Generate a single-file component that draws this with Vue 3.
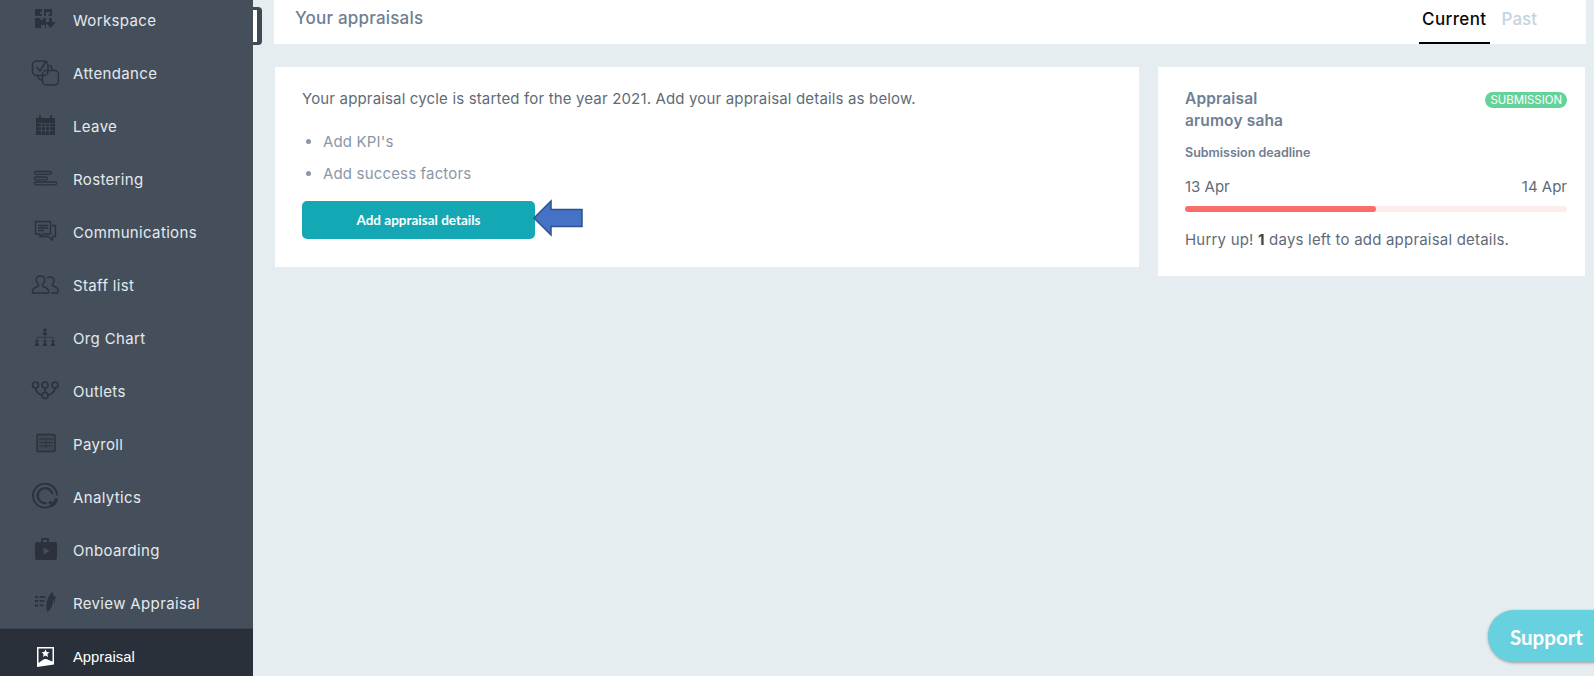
<template>
  <div class="page">
    <aside class="sidebar">
      <nav class="nav">
        <a
          v-for="item in menu"
          :key="item.label"
          class="nav-item"
          :class="{ active: item.active }"
        >
          <svg class="nav-icon" viewBox="0 0 28 28" v-html="item.icon"></svg>
          <span>{{ item.label }}</span>
        </a>
      </nav>
    </aside>
    <div class="scroll-handle"></div>

    <main class="main">
      <header class="topbar">
        <h1>Your appraisals</h1>
        <div class="tabs">
          <span class="tab current">Current</span>
          <span class="tab">Past</span>
        </div>
      </header>

      <div class="cards">
        <section class="card intro">
          <p class="lead">Your appraisal cycle is started for the year 2021. Add your appraisal details as below.</p>
          <ul>
            <li>Add KPI's</li>
            <li>Add success factors</li>
          </ul>
          <div class="action">
            <button class="add-btn">Add appraisal details</button>
            <svg class="arrow" width="52" height="38" viewBox="0 0 52 38">
              <path d="M2 19 19 2v8.500h31v17H19V36z" fill="#4472c4" stroke="#2f528f" stroke-width="1.500" />
            </svg>
          </div>
        </section>

        <section class="card deadline">
          <div class="deadline-head">
            <h2>Appraisal<br />arumoy saha</h2>
            <span class="badge">SUBMISSION</span>
          </div>
          <div class="deadline-label">Submission deadline</div>
          <div class="dates">
            <span>13 Apr</span>
            <span>14 Apr</span>
          </div>
          <div class="bar">
            <div class="bar-fill" :style="{ width: progress + '%' }"></div>
          </div>
          <p class="hurry">Hurry up! <b>1</b> days left to add appraisal details.</p>
        </section>
      </div>
    </main>

    <div class="support">Support</div>
  </div>
</template>

<script setup>
const progress = 50;

const menu = [
  {
    label: "Workspace",
    icon: '<path fill="currentColor" d="M4 3h7v3h-2v2h2v2H4zM13 3h8v7h-3l-1-2h2V6h-4v4h-2zM4 12h5l1 2h2v-2h3v10h-1v-3h-4v3H4z"/><path fill="currentColor" d="M18 12h3v4h4l-5.500 6-5.500-6h4z"/>',
  },
  {
    label: "Attendance",
    icon: '<g fill="none" stroke="currentColor" stroke-width="1.500" stroke-linecap="round" stroke-linejoin="round"><rect x="1.500" y="2" width="15.500" height="14.500" rx="4"/><path d="M6 8.500 9 12l6-9.500"/><path d="M19 6.500c1.500.8 2.300 2.300 2.300 4.500M6.500 17c.5 2 1.500 3.500 4 4"/><rect x="11.500" y="11.500" width="16" height="14.500" rx="4"/></g>',
  },
  {
    label: "Leave",
    icon: '<path fill="currentColor" d="M5 6h3V3h2v3h9V3h2v3h3v17H5z"/><g fill="#444f5b"><path d="M6.500 11h16v.8h-16zM6.500 14.500h16v.8h-16zM6.500 18h16v.8h-16zM10 11h.8v11H10zM14 11h.8v11H14zM18 11h.8v11H18z"/></g>',
  },
  {
    label: "Rostering",
    icon: '<g fill="none" stroke="currentColor" stroke-width="1.300"><rect x="3.500" y="6.500" width="17" height="2.800" rx="1.400"/><rect x="3.500" y="12" width="13" height="2.800" rx="1.400"/><rect x="3.500" y="17" width="22" height="2.800" rx="1.400"/></g>',
  },
  {
    label: "Communications",
    icon: '<g fill="none" stroke="currentColor" stroke-width="1.400" stroke-linejoin="round"><path d="M4.500 3.500h15v12.500H12l-3 3v-3H4.500z"/><path d="M21 7.500h3.500v11h-3v4l-4-4h-7"/><path d="M7 7.500h10M7 10h10M7 12.500h6"/></g>',
  },
  {
    label: "Staff list",
    icon: '<g fill="none" stroke="currentColor" stroke-width="1.400" stroke-linejoin="round"><path d="M1.500 22v-2.500c0-1.500 1-2 3-3l3-1.500v-2C6 12 5.200 10.500 5.200 9c0-2.500 2-4 4.300-4s4.300 1.500 4.300 4c0 1.500-.8 3-2.300 4v2l3 1.500c2 1 3 1.500 3 3V22z"/><path d="M16 7c1-.8 2-1 3-1 2.200 0 4 1.500 4 3.500 0 1.200-.5 2.500-1.500 3.500v1.500l3 1.500c1.500.7 2.500 1.500 2.500 2.500V22h-7"/></g>',
  },
  {
    label: "Org Chart",
    icon: '<g fill="currentColor"><circle cx="14" cy="6" r="1.800"/><path d="M11.800 11c0-2 1-3 2.200-3s2.200 1 2.200 3z"/><circle cx="6" cy="17" r="1.500"/><path d="M4 22c0-2 .8-3.500 2-3.500S8 20 8 22z"/><circle cx="14" cy="17" r="1.500"/><path d="M12 22c0-2 .8-3.500 2-3.500s2 1.500 2 3.500z"/><circle cx="22" cy="17" r="1.500"/><path d="M20 22c0-2 .8-3.500 2-3.500s2 1.500 2 3.500z"/></g><path fill="none" stroke="currentColor" stroke-width=".8" d="M14 11v4M6 15v-1.700h16V15"/>',
  },
  {
    label: "Outlets",
    icon: '<g fill="none" stroke="currentColor" stroke-width="1.600"><circle cx="4.500" cy="8" r="3"/><circle cx="14" cy="8" r="3"/><circle cx="24" cy="8" r="3"/><circle cx="14" cy="18.500" r="3"/><path d="M4.500 11c0 4 4 6.500 6.500 7M14 11v4.500M24 11c0 4-4 6.500-7 7"/></g>',
  },
  {
    label: "Payroll",
    icon: '<rect x="6" y="4.500" width="18" height="17" rx="1.500" fill="currentColor" fill-opacity=".25" stroke="currentColor" stroke-width="1.600"/><path stroke="currentColor" d="M8 9h14M8 12.500h14M8 16h14M15 9v9"/>',
  },
  {
    label: "Analytics",
    icon: '<g fill="none" stroke="currentColor"><path stroke-width="1.800" d="M21.500 22A12 12 0 1 1 26 12.500"/><path stroke-width="2.200" d="M15.500 20a7.500 7.500 0 1 1 6-9"/><path stroke-width="3.400" d="M25.500 15.500a10.500 10.500 0 0 1-4 6.500l-3-3.500"/></g>',
  },
  {
    label: "Onboarding",
    icon: '<path fill="currentColor" d="M10 6V3.500A1.500 1.500 0 0 1 11.500 2h5A1.500 1.500 0 0 1 18 3.500V6h6a2 2 0 0 1 2 2v14a2 2 0 0 1-2 2H6a2 2 0 0 1-2-2V8a2 2 0 0 1 2-2zm2 0h4V4h-4z"/><path fill="#444f5b" d="m12.500 11.500 6 3.500-6 3.500z"/>',
  },
  {
    label: "Review Appraisal",
    icon: '<g fill="currentColor"><rect x="4" y="7" width="3" height="2.200"/><rect x="4" y="11" width="3" height="2.200"/><rect x="4" y="15.500" width="3" height="2.200"/><rect x="8.500" y="7" width="6" height="1.800"/><rect x="8.500" y="11" width="5" height="1.800"/><rect x="8.500" y="15.500" width="4" height="1.800"/><path d="M16 23c-1-5-.5-12 2-16l3-4 1 1 .5 3 2 .5-1 8-1-6c-.5 6-2 11-6.500 13.500z"/></g>',
  },
  {
    label: "Appraisal",
    active: true,
    icon: '<path fill="#fff" fill-rule="evenodd" d="M6 4h17v17.500L6 24zM7.500 5.500V20c3-2 5-4 7-4s4 1.500 7 2.500V5.500z"/><path fill="#fff" d="m14.500 6.500 1.200 2.500 2.800.3-2.100 1.800.6 2.800-2.500-1.400-2.500 1.400.6-2.800-2.100-1.800 2.800-.3z"/>',
  },
];
</script>

<style scoped>
.page {
  position: relative;
  display: flex;
  width: 1594px;
  height: 676px;
  overflow: hidden;
  background: #e6edf1;
  font-family: "Inter", "Open Sans", sans-serif;
}

/* SIDEBAR */
.sidebar {
  width: 253px;
  flex-shrink: 0;
  background: #444f5b;
  overflow: hidden;
}
.nav {
  margin-top: -6.500px;
}
.nav-item {
  display: flex;
  align-items: center;
  gap: 14px;
  height: 53px;
  padding-left: 31px;
  color: #e4e9ed;
  font-size: 15px;
  letter-spacing: 0.35px;
}
.nav-icon {
  width: 28px;
  height: 28px;
  flex-shrink: 0;
  color: #2b323d;
}
.nav-item.active {
  margin-top: -2px;
  padding-top: 2px;
  background: #2a303a;
  border-top: 1px solid #3a434e;
  color: #fff;
  font-family: "Liberation Sans", sans-serif;
  font-size: 14.800px;
  letter-spacing: 0;
}
.scroll-handle {
  position: absolute;
  left: 253px;
  top: 7px;
  width: 9px;
  height: 38px;
  box-sizing: border-box;
  background: #fff;
  border: 3px solid #3f4a55;
  border-left: none;
  border-right-width: 5px;
  border-radius: 0 4px 4px 0;
}

/* MAIN */
.main {
  flex: 1;
  padding: 0 8px 0 21px;
}
.topbar {
  display: flex;
  justify-content: space-between;
  height: 44px;
  padding: 0 47px 0 21px;
  background: #fff;
}
.topbar h1 {
  margin: 0;
  font-size: 17px;
  font-weight: 500;
  letter-spacing: 0.2px;
  line-height: 37px;
  color: #6f7e90;
}
.tabs {
  display: flex;
  gap: 10px;
}
.tab {
  padding: 0 2px;
  font-size: 17px;
  font-weight: 500;
  line-height: 38px;
  color: #c5d3de;
}
.tab.current {
  padding: 0 3px;
  color: #0a0a0a;
  border-bottom: 2px solid #000;
  height: 42px;
  letter-spacing: 0.4px;
}
.cards {
  display: flex;
  align-items: flex-start;
  gap: 19px;
  margin: 23px 0 0 1px;
}
.card {
  background: #fff;
  box-sizing: border-box;
}

/* LEFT CARD */
.intro {
  width: 864px;
  height: 200px;
  padding: 22px 27px;
}
.lead {
  margin: 0;
  font-size: 15px;
  letter-spacing: 0.16px;
  line-height: 19px;
  color: #5f6b78;
}
.intro ul {
  margin: 24px 0 0;
  padding-left: 21px;
  color: #8a97a8;
  font-size: 15px;
  letter-spacing: 0.16px;
  line-height: 19px;
}
.intro li {
  margin-bottom: 13px;
}
.action {
  display: flex;
  align-items: center;
  margin-top: 16px;
}
.add-btn {
  width: 233px;
  height: 38px;
  border: none;
  border-radius: 5px;
  background: #14a8b4;
  color: #fff;
  font-family: "Lato", sans-serif;
  font-size: 13.500px;
  font-weight: 700;
}
.arrow {
  margin: 0 0 3px -3px;
}

/* RIGHT CARD */
.deadline {
  width: 427px;
  height: 209px;
  padding: 21px 18px 0 27px;
}
.deadline-head {
  display: flex;
  justify-content: space-between;
  align-items: flex-start;
}
.deadline-head h2 {
  margin: 0;
  font-size: 15.500px;
  font-weight: 600;
  letter-spacing: 0.15px;
  line-height: 21.500px;
  color: #6f7e90;
}
.badge {
  margin-top: 4px;
  padding: 0 5px;
  height: 16px;
  border-radius: 8px;
  background: #64d39a;
  color: #fff;
  font-size: 11.400px;
  line-height: 16px;
}
.deadline-label {
  margin-top: 14px;
  font-size: 12.500px;
  font-weight: 600;
  line-height: 16px;
  color: #6f7e90;
}
.dates {
  display: flex;
  justify-content: space-between;
  margin-top: 16px;
  font-size: 15px;
  line-height: 19px;
  color: #5f6b78;
}
.bar {
  height: 6px;
  margin-top: 10px;
  border-radius: 3px;
  background: #fdeeee;
}
.bar-fill {
  height: 100%;
  border-radius: 3px;
  background: #f96e6a;
}
.hurry {
  margin: 18px 0 0;
  font-size: 15px;
  letter-spacing: 0.2px;
  line-height: 19px;
  color: #5f6b78;
}
.hurry b {
  font-weight: 700;
  color: #3c4652;
}

/* SUPPORT */
.support {
  position: absolute;
  left: 1488px;
  top: 610px;
  width: 130px;
  height: 52px;
  padding-left: 22px;
  box-sizing: border-box;
  border-radius: 26px;
  background: #68d1e0;
  box-shadow: 0 1px 3px rgba(0, 0, 0, 0.35);
  color: #fff;
  font-family: "Lato", sans-serif;
  font-size: 20.500px;
  font-weight: 700;
  line-height: 55px;
}
</style>

<style>
body {
  margin: 0;
  overflow: hidden;
}
</style>
